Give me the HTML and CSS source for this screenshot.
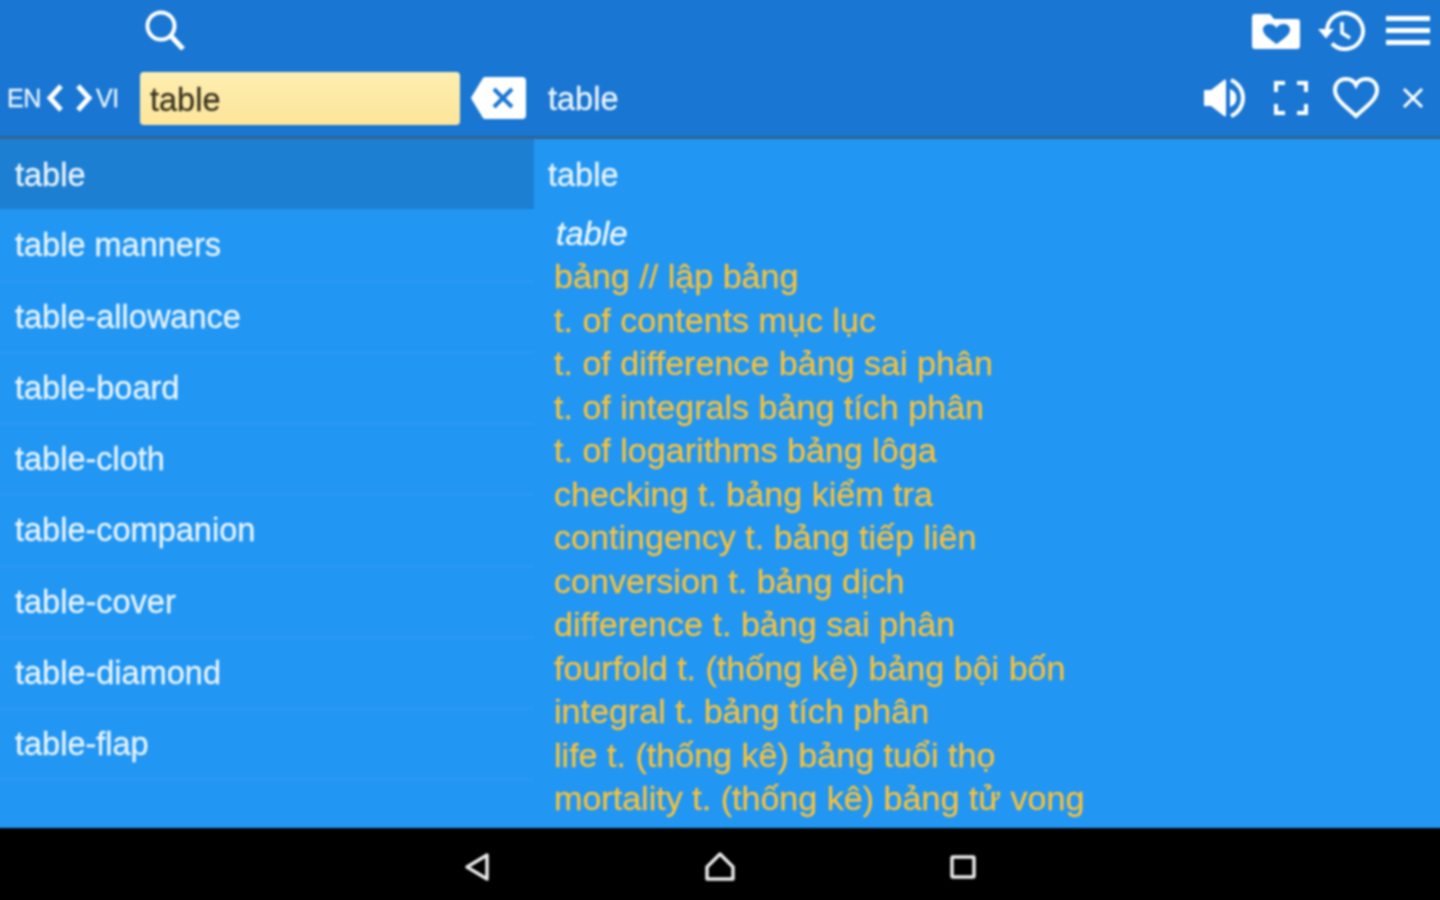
FILE: index.html
```html
<!DOCTYPE html>
<html lang="en">
<head>
	<meta charset="UTF-8">
	<title>Dictionary</title>
	<link rel="stylesheet" href="styles.css">
</head>
<body>
	<div class="app">
		<div class="head">
			<div class="top">
				<svg class="search" viewBox="0 0 40 40"><circle cx="16" cy="16" r="13.500"/><path d="M26 26 L38 39" class="thick"/></svg>
				<div class="top-right">
					<svg class="folder" viewBox="0 0 48 36"><path fill-rule="evenodd" d="M3 1h15l4 5h23a3 3 0 0 1 3 3v24a3 3 0 0 1-3 3H3a3 3 0 0 1-3-3V4a3 3 0 0 1 3-3zM24.500 31C18 26 11 22 11 16.500 11 13 14 11 17.500 11 20.500 11 23 12.500 24.500 15 26 12.500 28.500 11 31.500 11 35 11 38 13 38 16.500 38 22 31 26 24.500 31z"/></svg>
					<svg class="history" viewBox="0 0 48 40"><path d="M9 20a18 18 0 1 1 5 12.500"/><path class="solid" d="M0 18h16l-8 9.500z"/><path class="hands" d="M24 11v11l8 5"/></svg>
					<div class="burger"><i></i><i></i><i></i></div>
				</div>
			</div>
			<div class="bar">
				<span class="lang">EN</span>
				<svg class="chev" viewBox="0 0 18 28"><path d="M15 2 L4 14 L15 26"/></svg>
				<svg class="chev chev-r" viewBox="0 0 18 28"><path d="M3 2 L14 14 L3 26"/></svg>
				<span class="lang">VI</span>
				<div class="input">table</div>
				<svg class="back" viewBox="0 0 55 42"><path class="solid" d="M14 0h37a4 4 0 0 1 4 4v34a4 4 0 0 1-4 4H14a3 3 0 0 1-2-1L1 23a3 3 0 0 1 0-4L12 1a3 3 0 0 1 2-1z"/><path class="cross" d="M23 12 L41 30 M41 12 L23 30"/></svg>
				<span class="word">table</span>
				<div class="bar-right">
					<svg class="speaker" viewBox="0 0 44 40"><path class="solid" d="M1 12h6L20 2c1-1 2 0 2 1v34c0 1-1 2-2 1L7 28H1a1 1 0 0 1-1-1V13a1 1 0 0 1 1-1z"/><path class="solid" d="M26 11a9.500 9.500 0 0 1 0 18z"/><path d="M27 2a19.500 19.500 0 0 1 0 36"/></svg>
					<svg class="full" viewBox="0 0 36 36"><path d="M3 12V3h9M24 3h9v9M33 24v9h-9M12 33H3v-9"/></svg>
					<svg class="heart" viewBox="0 0 46 42"><path d="M23 39 C14 30 2 23 2 13 C2 6 7 2 13 2 C17 2 21 4 23 8 C25 4 29 2 33 2 C39 2 44 6 44 13 C44 23 32 30 23 39z"/></svg>
					<svg class="close" viewBox="0 0 22 22"><path d="M2 2 L20 20 M20 2 L2 20"/></svg>
				</div>
			</div>
		</div>
		<div class="main">
			<div class="list">
				<div class="row on">table</div>
				<div class="row">table manners</div>
				<div class="row">table-allowance</div>
				<div class="row">table-board</div>
				<div class="row">table-cloth</div>
				<div class="row">table-companion</div>
				<div class="row">table-cover</div>
				<div class="row">table-diamond</div>
				<div class="row">table-flap</div>
			</div>
			<div class="detail">
				<div class="title">table</div>
				<div class="def">
					<div class="head-word">table</div>
					<div>bảng // lập bảng</div>
					<div>t. of contents mục lục</div>
					<div>t. of difference bảng sai phân</div>
					<div>t. of integrals bảng tích phân</div>
					<div>t. of logarithms bảng lôga</div>
					<div>checking t. bảng kiểm tra</div>
					<div>contingency t. bảng tiếp liên</div>
					<div>conversion t. bảng dịch</div>
					<div>difference t. bảng sai phân</div>
					<div>fourfold t. (thống kê) bảng bội bốn</div>
					<div>integral t. bảng tích phân</div>
					<div>life t. (thống kê) bảng tuổi thọ</div>
					<div>mortality t. (thống kê) bảng tử vong</div>
				</div>
			</div>
		</div>
		<div class="nav">
			<svg class="nav-back" viewBox="0 0 26 30"><path d="M23 3 L3 15 L23 27z"/></svg>
			<svg class="nav-home" viewBox="0 0 30 30"><path d="M15 2 L28 15 V27 H2 V15z"/></svg>
			<svg class="nav-recent" viewBox="0 0 26 26"><rect x="2" y="3" width="22" height="20" rx="1"/></svg>
		</div>
	</div>
</body>
</html>
```

FILE: styles.css
```css
html, body {
	margin: 0;
	height: 100%;
	overflow: hidden;
}
body {
	font-family: "Liberation Sans", Arial, sans-serif;
	font-size: 32.500px;
	color: #e9f4fd;
	-webkit-text-stroke: 0.3px currentColor;
}
svg {
	display: block;
	fill: none;
	stroke: #fff;
	stroke-width: 4;
	flex: none;
}
svg .solid {
	fill: #fff;
	stroke: none;
}

/* 4px bleed on every side so the blur doesn't fade at the window edge */
.app {
	display: flex;
	flex-direction: column;
	width: 1448px;
	height: 908px;
	margin: -4px;
	filter: blur(0.8px);
}

.head {
	height: 136px;
	padding-top: 4px;
	background: #1976d2;
	border-bottom: 3px solid #33658f;
	flex: none;
}
.top {
	display: flex;
	align-items: center;
	height: 60px;
	padding: 0 14px 0 149px;
}
.search {
	width: 40px;
	height: 40px;
}
.search .thick {
	stroke-width: 5;
}
.top-right {
	display: flex;
	align-items: center;
	margin-left: auto;
}
.folder {
	width: 48px;
	height: 36px;
	fill: #fff;
	stroke: none;
	margin-top: 1px;
}
.history {
	width: 48px;
	height: 40px;
	margin-left: 18px;
	margin-top: 2px;
}
.history .hands {
	stroke-width: 3.500;
}
.burger {
	margin-left: 20px;
	width: 44px;
}
.burger i {
	display: block;
	height: 5px;
	background: #fff;
	margin-bottom: 7px;
}
.burger i:last-child {
	margin-bottom: 0;
}

.bar {
	display: flex;
	align-items: center;
	height: 76px;
	padding-left: 11px;
}
.lang {
	font-size: 25px;
	letter-spacing: -0.500px;
	width: 35px;
}
.chev {
	width: 18px;
	height: 28px;
	margin-left: 4px;
	stroke-width: 5;
}
.chev-r {
	margin-left: 11px;
	margin-right: 3px;
}
.input {
	width: 310px;
	height: 53px;
	line-height: 56px;
	margin-left: 9px;
	padding-left: 10px;
	background: linear-gradient(#fdeeb0, #fee59a);
	border-radius: 4px;
	color: #3a3520;
}
.back {
	width: 55px;
	height: 42px;
	margin-left: 11px;
}
.back .cross {
	stroke: #1976d2;
	stroke-width: 4;
}
.word {
	margin-left: 22px;
	padding-top: 3px;
}
.bar-right {
	display: flex;
	align-items: center;
	margin-left: auto;
	padding-right: 20px;
}
.speaker {
	width: 44px;
	height: 40px;
}
.full {
	width: 36px;
	height: 36px;
	margin-left: 25px;
}
.heart {
	width: 46px;
	height: 42px;
	margin-left: 24px;
}
.close {
	width: 22px;
	height: 22px;
	margin-left: 23px;
	stroke-width: 3;
}

.main {
	display: flex;
	flex: 1;
	min-height: 0;
	background: #2196f3;
	overflow: hidden;
}
.list {
	width: 538px;
	flex: none;
}
.row {
	display: flex;
	align-items: center;
	height: 71.250px;
	box-sizing: border-box;
	padding-left: 19px;
	padding-top: 1px;
	border-bottom: 1px solid #34a0f3;
}
.row.on {
	background: #1d7fd2;
	border-bottom: none;
	height: 70px;
	padding-top: 2px;
	margin-bottom: 1.250px;
}
.detail {
	flex: 1;
}
.title {
	height: 72px;
	line-height: 72px;
	padding-left: 14px;
}
.def {
	padding-left: 20px;
	font-size: 34.100px;
	line-height: 43.500px;
	color: #f7c13c;
}
.head-word {
	font-size: 33px;
	font-style: italic;
	margin-left: 2px;
	padding-top: 1px;
	margin-bottom: -0.500px;
	color: #eef7fe;
}

.nav {
	display: flex;
	align-items: center;
	justify-content: center;
	height: 76px;
	flex: none;
	background: #000;
	box-sizing: border-box;
	padding: 6px 0 4px;
}
.nav svg {
	stroke: #e8e8e8;
	stroke-width: 3.500;
	stroke-linejoin: round;
}
.nav-back {
	width: 26px;
	height: 30px;
}
.nav-home {
	width: 30px;
	height: 30px;
	margin-left: 215px;
}
.nav-recent {
	width: 26px;
	height: 26px;
	margin-left: 215px;
}
```
